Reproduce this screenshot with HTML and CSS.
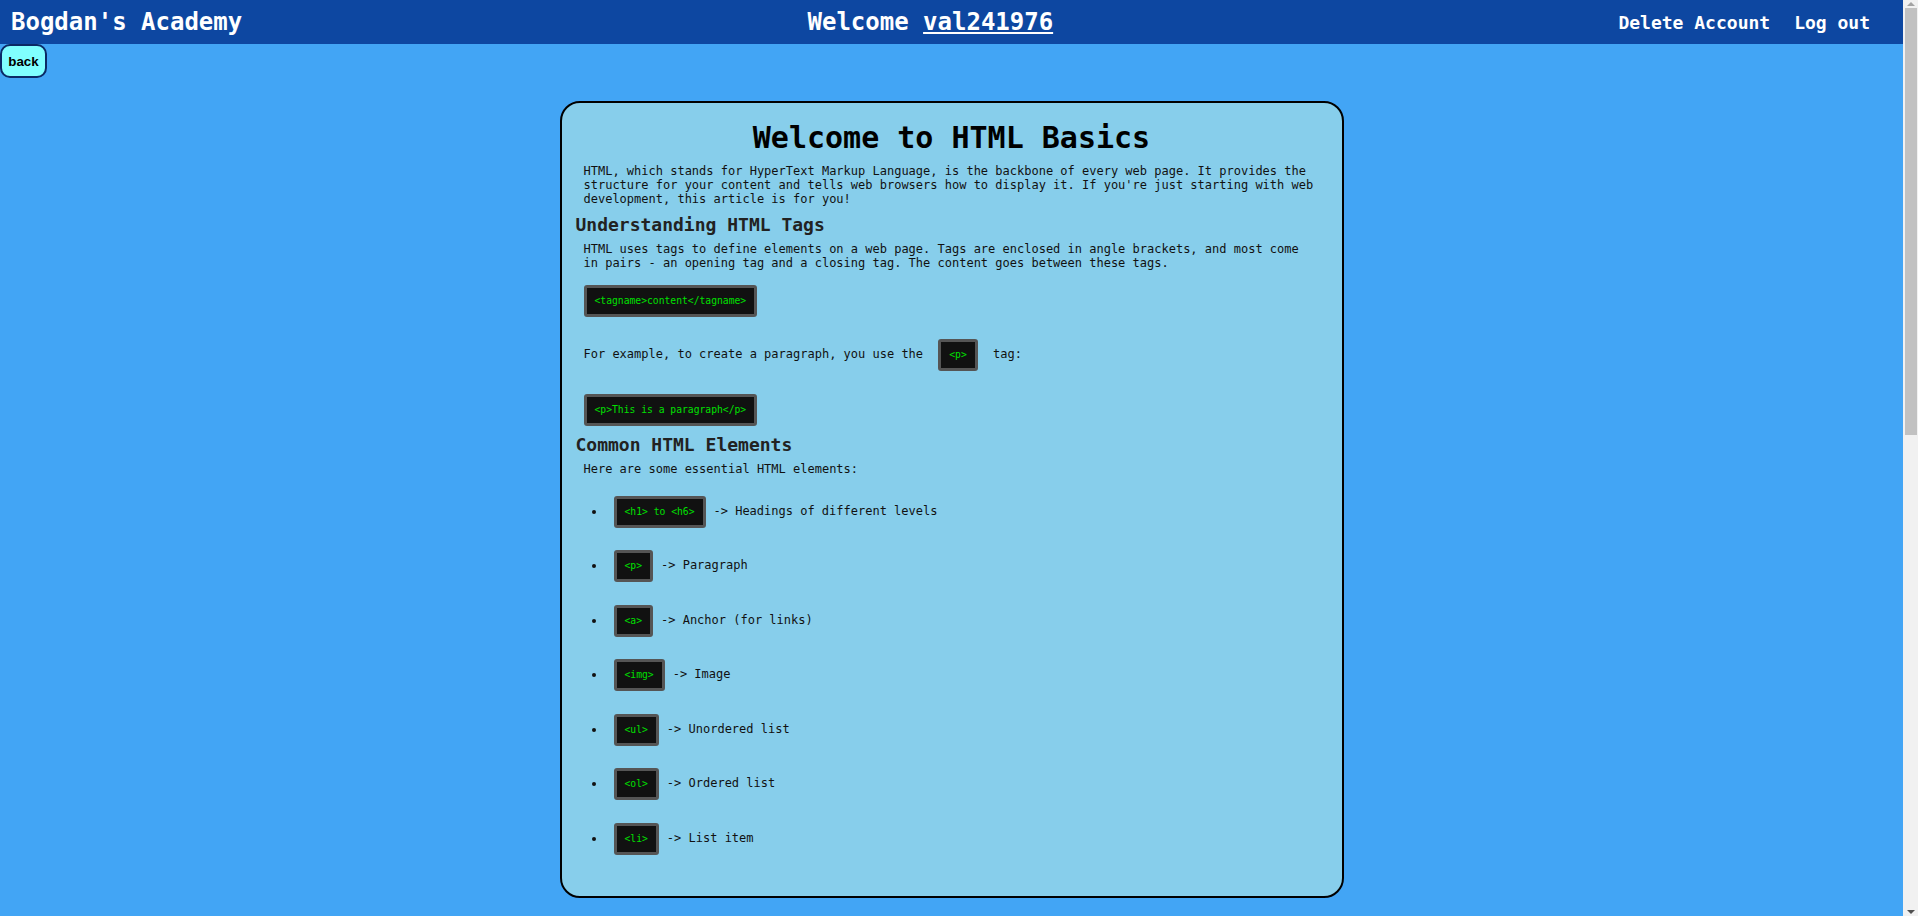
FILE: index.html
```html
<!DOCTYPE html>
<html lang="en">
<head>
<meta charset="utf-8">
<title>HTML Basics - Bogdan's Academy</title>
<link rel="stylesheet" href="styles.css">
</head>
<body>
<div class="viewport">
  <div class="content">
    <header class="topbar">
      <div class="brand">Bogdan's Academy</div>
      <div class="welcome">Welcome <a class="user" href="#">val241976</a></div>
      <nav class="nav">
        <a class="nav-link" href="#">Delete Account</a>
        <a class="nav-link" href="#">Log out</a>
      </nav>
    </header>
    <main class="page">
      <button class="back">back</button>
      <article class="card">
        <h1 class="title">Welcome to HTML Basics</h1>
        <p class="text first">HTML, which stands for HyperText Markup Language, is the backbone of every web page. It provides the structure for your content and tells web browsers how to display it. If you're just starting with web development, this article is for you!</p>
        <h2 class="section">Understanding HTML Tags</h2>
        <p class="text">HTML uses tags to define elements on a web page. Tags are enclosed in angle brackets, and most come in pairs - an opening tag and a closing tag. The content goes between these tags.</p>
        <div class="code-row after-text"><code class="code">&lt;tagname&gt;content&lt;/tagname&gt;</code></div>
        <p class="text inline-row">For example, to create a paragraph, you use the <code class="code">&lt;p&gt;</code> tag:</p>
        <div class="code-row after-inline"><code class="code">&lt;p&gt;This is a paragraph&lt;/p&gt;</code></div>
        <h2 class="section">Common HTML Elements</h2>
        <p class="text">Here are some essential HTML elements:</p>
        <ul class="elements">
          <li><code class="code">&lt;h1&gt; to &lt;h6&gt;</code>-&gt; Headings of different levels</li>
          <li><code class="code">&lt;p&gt;</code>-&gt; Paragraph</li>
          <li><code class="code">&lt;a&gt;</code>-&gt; Anchor (for links)</li>
          <li><code class="code">&lt;img&gt;</code>-&gt; Image</li>
          <li><code class="code">&lt;ul&gt;</code>-&gt; Unordered list</li>
          <li><code class="code">&lt;ol&gt;</code>-&gt; Ordered list</li>
          <li><code class="code">&lt;li&gt;</code>-&gt; List item</li>
        </ul>
      </article>
    </main>
  </div>
  <div class="scrollbar" aria-hidden="true">
    <div class="sb-arrow up"></div>
    <div class="sb-track"><div class="sb-thumb"></div></div>
    <div class="sb-arrow down"></div>
  </div>
</div>
</body>
</html>
```
FILE: styles.css
```css
html, body {
  margin: 0;
  padding: 0;
}
body {
  background: #42a5f5;
  font-family: "DejaVu Sans Mono", monospace;
  color: #111;
}
.viewport {
  display: grid;
  grid-template-columns: 1fr 15px;
  align-items: start;
}
.content {
  min-width: 0;
  padding-bottom: 1032px;
}
.topbar {
  height: 44px;
  background: #0d47a1;
  color: #fff;
  display: flex;
  align-items: center;
  justify-content: space-between;
  padding: 0 33px 0 11px;
  font-weight: bold;
}
.brand, .welcome {
  font-size: 24px;
}
.user {
  color: #fff;
  text-decoration: underline;
}
.nav {
  display: flex;
  gap: 24px;
}
.nav-link {
  color: #fff;
  text-decoration: none;
  font-size: 18px;
}
.back {
  display: block;
  margin: 0;
  width: 47px;
  height: 34px;
  box-sizing: border-box;
  padding: 0;
  background: #80ffff;
  border: 2px solid #0b2a66;
  border-radius: 10px;
  font-family: "Liberation Sans", Arial, sans-serif;
  font-weight: bold;
  font-size: 13.33px;
  color: #000;
}
.card {
  box-sizing: border-box;
  width: 784px;
  margin: 23px auto 0;
  background: #87ceeb;
  border: 2px solid #000;
  border-radius: 20px;
  padding: 0 14px;
}
.title {
  margin: 17px 0 0;
  font-size: 30px;
  line-height: 35px;
  text-align: center;
  color: #000;
}
.text {
  margin: 7.3px 0 0 8px;
  width: 733px;
  font-size: 12px;
  line-height: 14px;
  color: #111;
}
.text.first {
  margin-top: 9px;
}
.section {
  margin: 7.5px 0 0;
  font-size: 18px;
  line-height: 21px;
  color: #222;
}
.code {
  display: inline-block;
  margin: 0 8px;
  padding: 7px 8px;
  background: #111;
  border: 3px solid #555;
  border-radius: 3px;
  color: #00e000;
  font-family: "DejaVu Sans Mono", monospace;
  font-size: 9.7px;
  line-height: 12px;
}
.code-row {
  line-height: 0;
}
.code-row.after-text {
  margin-top: 15.5px;
}
.code-row.after-inline {
  margin-top: 23px;
}
.text.inline-row {
  margin-top: 22px;
}
.elements {
  margin: 19.5px 0 41px;
  padding-left: 30px;
  font-size: 12px;
  line-height: 14px;
  color: #111;
}
.elements li + li {
  margin-top: 22.5px;
}

/* classic browser scrollbar gutter */
.scrollbar {
  position: sticky;
  top: 0;
  height: 100vh;
  background: #f1f1f1;
  display: flex;
  flex-direction: column;
}
.sb-arrow {
  height: 8px;
  display: flex;
  justify-content: center;
  align-items: center;
}
.sb-arrow::before {
  content: "";
  width: 0;
  height: 0;
  border-left: 4px solid transparent;
  border-right: 4px solid transparent;
}
.sb-arrow.up::before {
  border-bottom: 4px solid #a3a3a3;
}
.sb-arrow.down::before {
  border-top: 4px solid #505050;
}
.sb-track {
  flex: 1;
  padding: 0 1px 0 2px;
}
.sb-thumb {
  height: 427px;
  background: #c1c1c1;
}
```
